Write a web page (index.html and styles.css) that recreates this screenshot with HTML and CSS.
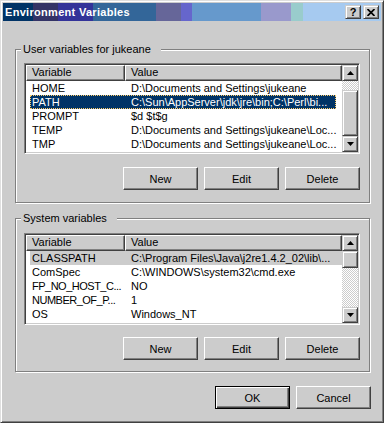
FILE: index.html
```html
<!DOCTYPE html>
<html lang="en">
<head>
    <meta charset="UTF-8">
    <title>Environment Variables</title>
    <link rel="stylesheet" href="styles.css">
</head>
<body>
    <div class="window">
        <div class="titlebar">
            <span class="title">Environment Variables</span>
            <div class="caption-btns">
                <div class="cap-btn help">?</div>
                <div class="cap-btn">
                    <svg width="8" height="7" viewBox="0 0 8 7"><path d="M0.5 0 L7.5 7 M7.5 0 L0.5 7" stroke="#000" stroke-width="1.7" fill="none"/></svg>
                </div>
            </div>
        </div>

        <div class="content">
            <div class="group">
                <span class="group-label">User variables for jukeane</span>
                <div class="listview user-list">
                    <div class="list-main">
                        <div class="list-header">
                            <div class="col-h col-var">Variable</div>
                            <div class="col-h col-val">Value</div>
                        </div>
                        <div class="row"><span class="cell-var">HOME</span><span class="cell-val">D:\Documents and Settings\jukeane</span></div>
                        <div class="row selected"><span class="cell-var">PATH</span><span class="cell-val">C:\Sun\AppServer\jdk\jre\bin;C:\Perl\bi...</span></div>
                        <div class="row"><span class="cell-var">PROMPT</span><span class="cell-val">$d $t$g</span></div>
                        <div class="row"><span class="cell-var">TEMP</span><span class="cell-val">D:\Documents and Settings\jukeane\Loc...</span></div>
                        <div class="row"><span class="cell-var">TMP</span><span class="cell-val">D:\Documents and Settings\jukeane\Loc...</span></div>
                    </div>
                    <div class="scrollbar">
                        <div class="sb-btn"><svg width="7" height="4" viewBox="0 0 7 4"><path d="M3.5 0 L7 4 L0 4 Z" fill="#000"/></svg></div>
                        <div class="sb-track" style="height: 9px"></div>
                        <div class="sb-thumb" style="height: 46px"></div>
                        <div class="sb-track grow"></div>
                        <div class="sb-btn"><svg width="7" height="4" viewBox="0 0 7 4"><path d="M0 0 L7 0 L3.5 4 Z" fill="#000"/></svg></div>
                    </div>
                </div>
                <div class="btn-row">
                    <button class="btn">New</button>
                    <button class="btn">Edit</button>
                    <button class="btn">Delete</button>
                </div>
            </div>

            <div class="group system">
                <span class="group-label">System variables</span>
                <div class="listview sys-list">
                    <div class="list-main">
                        <div class="list-header">
                            <div class="col-h col-var">Variable</div>
                            <div class="col-h col-val">Value</div>
                        </div>
                        <div class="row inactive"><span class="cell-var">CLASSPATH</span><span class="cell-val">C:\Program Files\Java\j2re1.4.2_02\lib\...</span></div>
                        <div class="row"><span class="cell-var">ComSpec</span><span class="cell-val">C:\WINDOWS\system32\cmd.exe</span></div>
                        <div class="row"><span class="cell-var tight">FP_NO_HOST_C...</span><span class="cell-val">NO</span></div>
                        <div class="row"><span class="cell-var tight">NUMBER_OF_P...</span><span class="cell-val">1</span></div>
                        <div class="row"><span class="cell-var">OS</span><span class="cell-val">Windows_NT</span></div>
                    </div>
                    <div class="scrollbar">
                        <div class="sb-btn"><svg width="7" height="4" viewBox="0 0 7 4"><path d="M3.5 0 L7 4 L0 4 Z" fill="#000"/></svg></div>
                        <div class="sb-thumb" style="height: 17px"></div>
                        <div class="sb-track grow"></div>
                        <div class="sb-btn"><svg width="7" height="4" viewBox="0 0 7 4"><path d="M0 0 L7 0 L3.5 4 Z" fill="#000"/></svg></div>
                    </div>
                </div>
                <div class="btn-row">
                    <button class="btn">New</button>
                    <button class="btn">Edit</button>
                    <button class="btn">Delete</button>
                </div>
            </div>

            <div class="dialog-btns">
                <button class="btn default">OK</button>
                <button class="btn">Cancel</button>
            </div>
        </div>
    </div>
</body>
</html>
```

FILE: styles.css
```css
body {
    margin: 0;
    background: #ffffff;
    font-family: "Liberation Sans", Arial, sans-serif;
    font-size: 11px;
    color: #000;
}

.window {
    width: 384px;
    height: 423px;
    box-sizing: border-box;
    background: #cccccc;
    border: 1px solid;
    border-color: #dfdfdf #404040 #404040 #dfdfdf;
    box-shadow: inset 1px 1px #ffffff, inset -1px -1px #808080;
    padding: 2px;
}

/* title bar */
.titlebar {
    height: 18px;
    display: flex;
    align-items: center;
    justify-content: space-between;
    padding: 0 2px;
    background: linear-gradient(to right,
        #003366 0 30px, #333366 30px 55px, #333399 55px 90px,
        #336699 90px 153px, #666699 153px 178px, #6666cc 178px 189px,
        #6699cc 189px 258px, #9999cc 258px 288px, #99cccc 288px 300px,
        #a6caf0 300px);
}
.title {
    color: #fff;
    font-weight: bold;
    font-size: 11px;
    letter-spacing: 0.3px;
}
.caption-btns {
    display: flex;
    gap: 2px;
}
.cap-btn {
    width: 16px;
    height: 14px;
    box-sizing: border-box;
    background: #cccccc;
    border: 1px solid;
    border-color: #cccccc #404040 #404040 #cccccc;
    box-shadow: inset 1px 1px #ffffff, inset -1px -1px #808080;
    display: flex;
    align-items: center;
    justify-content: center;
}
.cap-btn.help {
    font-weight: bold;
    font-size: 11px;
    line-height: 12px;
}

.content {
    padding: 28px 0 0 12px;
}

/* group boxes */
.group {
    width: 355px;
    box-sizing: border-box;
    border: 1px solid #808080;
    box-shadow: inset 1px 1px #ffffff, 1px 1px #ffffff;
    padding: 0 9px 12px 8px;
}
.group.system {
    margin-top: 15px;
    padding-bottom: 11px;
}
.group-label {
    display: block;
    width: fit-content;
    margin: -7px 0 0 -3px;
    padding: 0 10px 0 2px;
    line-height: 13px;
    background: #cccccc;
}

/* list views */
.listview {
    display: flex;
    box-sizing: border-box;
    background: #fff;
    border: 1px solid;
    border-color: #808080 #ffffff #ffffff #808080;
    box-shadow: inset 1px 1px #404040, inset -1px -1px #cccccc;
    padding: 1px;
    margin-top: 7px;
}
.user-list {
    height: 91px;
}
.sys-list {
    height: 92px;
    margin-top: 8px;
}
.list-main {
    flex: 1;
    overflow: hidden;
}
.list-header {
    display: flex;
    height: 16px;
}
.col-h {
    box-sizing: border-box;
    background: #cccccc;
    border: 1px solid;
    border-color: #ffffff #404040 #404040 #ffffff;
    box-shadow: inset -1px -1px #808080;
    padding-left: 5px;
    line-height: 13px;
}
.col-var {
    width: 99px;
}
.col-val {
    flex: 1;
}
.row {
    display: flex;
    height: 14px;
    line-height: 14px;
    margin-left: 4px;
    white-space: nowrap;
}
.cell-var {
    width: 95px;
    padding-left: 2px;
    box-sizing: border-box;
}
.cell-var.tight {
    letter-spacing: -0.5px;
}
.cell-val {
    flex: 1;
    padding-left: 6px;
    overflow: hidden;
}
.row.selected {
    background: #003366;
    color: #fff;
    margin-right: 6px;
    outline: 1px dotted #ffcc66;
    outline-offset: -1px;
}
.row.inactive {
    background: #cccccc;
}

/* scrollbar */
.scrollbar {
    width: 16px;
    display: flex;
    flex-direction: column;
}
.sb-btn, .sb-thumb {
    box-sizing: border-box;
    background: #cccccc;
    border: 1px solid;
    border-color: #cccccc #404040 #404040 #cccccc;
    box-shadow: inset 1px 1px #ffffff, inset -1px -1px #808080;
}
.sb-btn {
    height: 16px;
    flex-shrink: 0;
    display: flex;
    align-items: center;
    justify-content: center;
}
.sb-thumb {
    flex-shrink: 0;
}
.sb-track {
    flex-shrink: 0;
    background: repeating-conic-gradient(#ffffff 0 25%, #cccccc 0 50%) 0 0 / 2px 2px;
}
.sb-track.grow {
    flex: 1;
}

/* buttons */
.btn-row {
    display: flex;
    justify-content: flex-end;
    gap: 6px;
    margin-top: 13px;
}
.system .btn-row {
    margin-top: 12px;
}
.btn {
    width: 75px;
    height: 23px;
    box-sizing: border-box;
    background: #cccccc;
    border: 1px solid;
    border-color: #ffffff #404040 #404040 #ffffff;
    box-shadow: inset -1px -1px #808080;
    font-family: "Liberation Sans", Arial, sans-serif;
    font-size: 11px;
    color: #000;
    padding: 0;
}
.btn.default {
    border: 1px solid #000;
    box-shadow: inset 1px 1px #ffffff, inset -1px -1px #404040, inset -2px -2px #808080;
}
.dialog-btns {
    width: 356px;
    display: flex;
    justify-content: flex-end;
    gap: 6px;
    margin-top: 14px;
}
```
